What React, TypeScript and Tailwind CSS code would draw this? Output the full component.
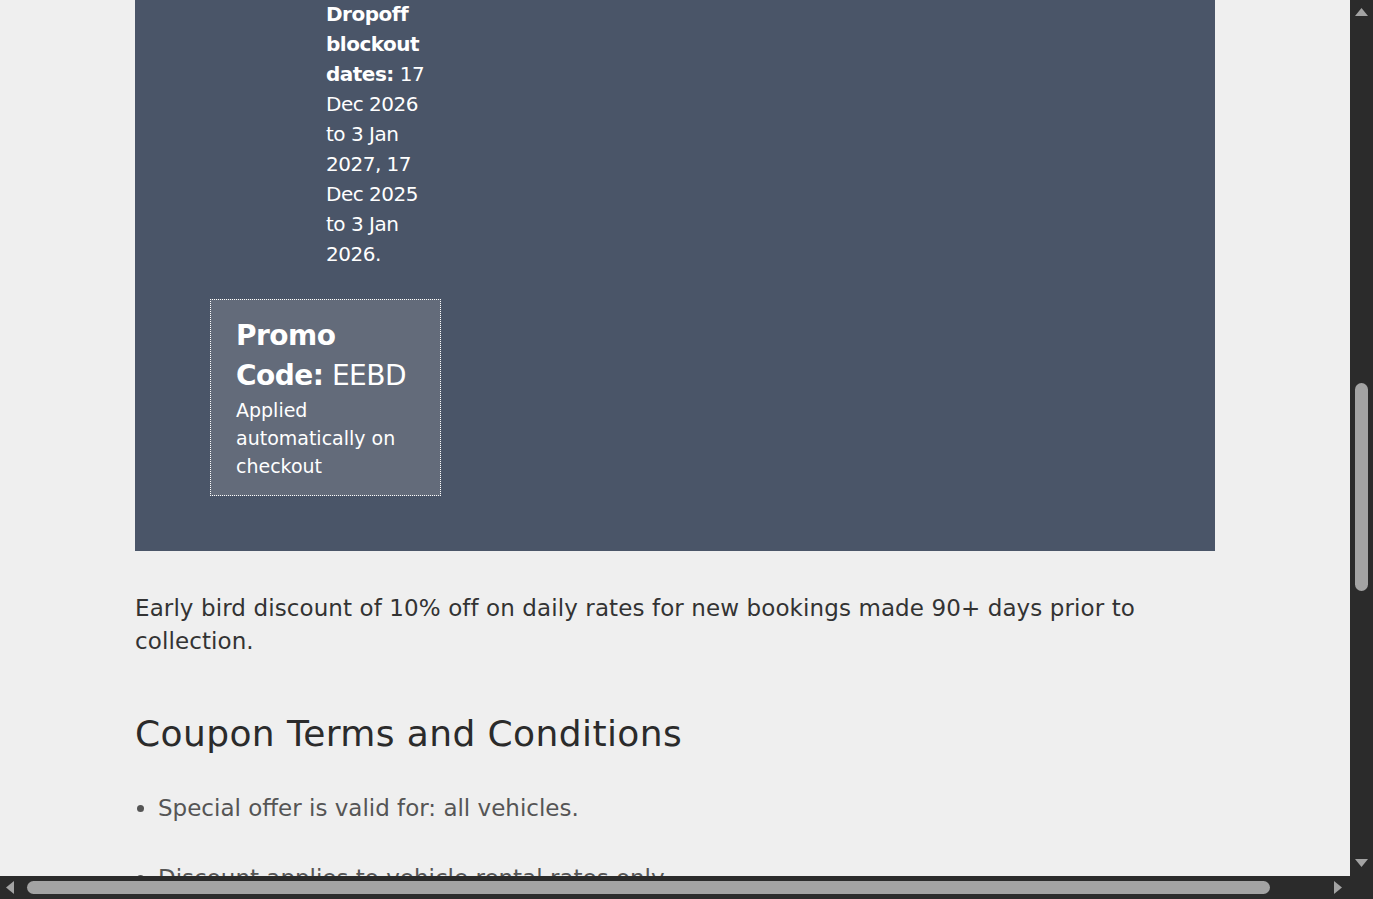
import React from 'react';

// Fake browser scrollbars, drawn so the picture matches the captured window
function VScrollbar() {
  return (
    <div className="relative h-full bg-[#2b2b2b]">
      <svg className="absolute left-[5px] top-[8px]" width="13" height="8" viewBox="0 0 13 8">
        <polygon points="6.5,0 13,8 0,8" fill="#a3a3a3" />
      </svg>
      <div className="absolute left-[5px] top-[383px] h-[208px] w-[13px] rounded-full bg-[#a3a3a3]" />
      <svg className="absolute left-[5px] top-[859px]" width="13" height="8" viewBox="0 0 13 8">
        <polygon points="0,0 13,0 6.5,8" fill="#a3a3a3" />
      </svg>
    </div>
  );
}

function HScrollbar() {
  return (
    <div className="relative h-full bg-[#2b2b2b]">
      <svg className="absolute left-[6px] top-[5px]" width="8" height="13" viewBox="0 0 8 13">
        <polygon points="8,0 8,13 0,6.5" fill="#a3a3a3" />
      </svg>
      <div className="absolute left-[27px] top-[5px] h-[13px] w-[1243px] rounded-full bg-[#a3a3a3]" />
      <svg className="absolute left-[1334px] top-[5px]" width="8" height="13" viewBox="0 0 8 13">
        <polygon points="0,0 8,6.5 0,13" fill="#a3a3a3" />
      </svg>
    </div>
  );
}

export default function App() {
  return (
    <div
      className="grid h-[899px] w-[1373px] grid-cols-[1350px_23px] grid-rows-[876px_23px] overflow-hidden"
      style={{ fontFamily: '"DejaVu Sans", sans-serif' }}
    >
      {/* Page */}
      <div className="overflow-hidden bg-[#efefef]">
        <div className="ml-[135px] w-[1080px]">
          {/* Offer panel */}
          <div className="bg-[#4a5568] pb-[55px] pl-[75px] text-white">
            <div className="-mt-px pl-[116px]">
              <p className="w-[112px] text-[20px] leading-[30px] tracking-[-0.5px]">
                <span className="font-bold">Dropoff blockout dates:</span> 17 Dec 2026 to 3 Jan 2027, 17 Dec 2025 to 3 Jan 2026.
              </p>
            </div>
            <div className="mt-[30px] w-[231px] border border-dotted border-white bg-[#636b7a] px-[25px] pb-[15px] pt-[16px]">
              <div className="text-[28px] leading-[40px] tracking-[-0.5px]">
                <span className="font-bold">Promo Code:</span> EEBD
              </div>
              <div className="text-[19px] leading-[28px]">Applied automatically on checkout</div>
            </div>
          </div>

          {/* Body copy */}
          <p className="mt-[41px] text-[23px] leading-[33px] tracking-[0.1px] text-[#333333]">
            Early bird discount of 10% off on daily rates for new bookings made 90+ days prior to collection.
          </p>

          <h2 className="mt-[52px] text-[36px] leading-[48px] tracking-[0.4px] text-[#2b2b2b]">
            Coupon Terms and Conditions
          </h2>

          <ul className="mt-[34px] list-disc pl-[23px] text-[23px] leading-[33px] text-[#555555]">
            <li className="mb-[37px]">Special offer is valid for: all vehicles.</li>
            <li className="mb-[37px]">Discount applies to vehicle rental rates only.</li>
          </ul>
        </div>
      </div>

      <VScrollbar />
      <HScrollbar />
      <div className="bg-[#2b2b2b]" />
    </div>
  );
}
